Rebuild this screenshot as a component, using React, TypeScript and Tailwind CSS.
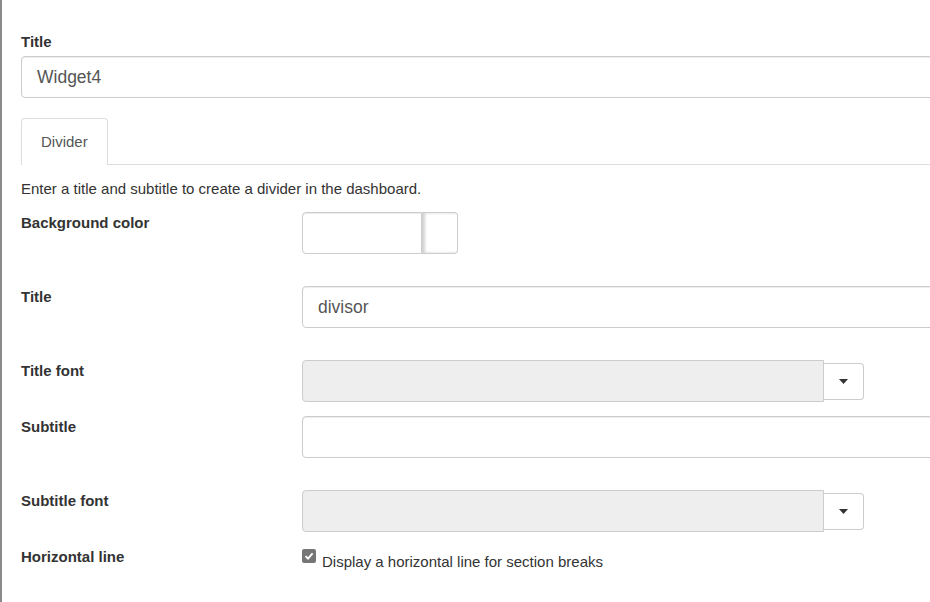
import React from 'react';

const Label: React.FC<{ text: string }> = ({ text }) => (
  <div className="w-[281px] shrink-0 font-bold text-[15px] leading-[21px] text-[#333]">{text}</div>
);

const TextInput: React.FC<{ value?: string; className?: string }> = ({ value, className }) => (
  <div
    className={`h-[42px] border border-[#ccc] rounded-[4px] bg-white shadow-[inset_0_1px_1px_rgba(0,0,0,0.075)] flex items-center pl-[15px] text-[17.5px] text-[#555] ${className ?? ''}`}
  >
    {value}
  </div>
);

const SelectBox: React.FC = () => (
  <div className="flex items-center">
    <div className="w-[522px] h-[42px] bg-[#eee] border border-[#ccc] rounded-l-[4px]" />
    <div className="w-[40px] h-[37px] bg-white border border-l-0 border-[#ccc] rounded-r-[4px] flex items-center justify-center">
      <svg width="9" height="5" viewBox="0 0 9 5">
        <path d="M0 0 L9 0 L4.5 5 Z" fill="#333" />
      </svg>
    </div>
  </div>
);

const App: React.FC = () => {
  return (
    <div className="w-[930px] h-[602px] overflow-hidden bg-white border-l-2 border-[#8a8a8a] font-['Liberation_Sans',Arial,sans-serif] text-[#333]">
      <div className="w-[1100px] pl-[19px] pt-[31px]">
        <div className="font-bold text-[15px] leading-[21px] mb-[4px]">Title</div>
        <TextInput value="Widget4" className="w-full" />

        {/* tabs */}
        <div className="mt-[20px] h-[47px] border-b border-[#ddd] flex">
          <div className="h-[47px] px-[19px] border border-[#ddd] border-b-0 rounded-t-[4px] bg-white flex items-center text-[15px] text-[#555] relative z-10">
            Divider
          </div>
        </div>

        <p className="mt-[13px] text-[15px] leading-[21px] text-[#333]">
          Enter a title and subtitle to create a divider in the dashboard.
        </p>

        <div className="mt-[13px] flex items-start mb-[32px]">
          <Label text="Background color" />
          <div className="flex">
            <div className="w-[120px] h-[42px] border border-[#ccc] rounded-l-[4px] shadow-[inset_0_1px_1px_rgba(0,0,0,0.075)]" />
            <div className="w-[36px] h-[42px] border border-l-0 border-[#ccc] rounded-r-[4px] bg-white shadow-[inset_3px_0_3px_rgba(0,0,0,0.18)]" />
          </div>
        </div>

        <div className="flex items-start mb-[32px]">
          <Label text="Title" />
          <TextInput value="divisor" className="flex-1" />
        </div>

        <div className="flex items-start mb-[14px]">
          <Label text="Title font" />
          <SelectBox />
        </div>

        <div className="flex items-start mb-[32px]">
          <Label text="Subtitle" />
          <TextInput className="flex-1" />
        </div>

        <div className="flex items-start mb-[14px]">
          <Label text="Subtitle font" />
          <SelectBox />
        </div>

        <div className="flex items-start">
          <Label text="Horizontal line" />
          <div className="pt-[5px] flex items-start gap-[6px] text-[15px] leading-[21px] text-[#333]">
            <span className="w-[14px] h-[14px] rounded-[2px] bg-[#767676] flex items-center justify-center -mt-[2px]">
              <svg width="10" height="10" viewBox="0 0 10 10">
                <path d="M1.5 5.2 L4 7.7 L8.6 2.4" stroke="#fff" strokeWidth="1.9" fill="none" />
              </svg>
            </span>
            Display a horizontal line for section breaks
          </div>
        </div>
      </div>
    </div>
  );
};

export default App;
